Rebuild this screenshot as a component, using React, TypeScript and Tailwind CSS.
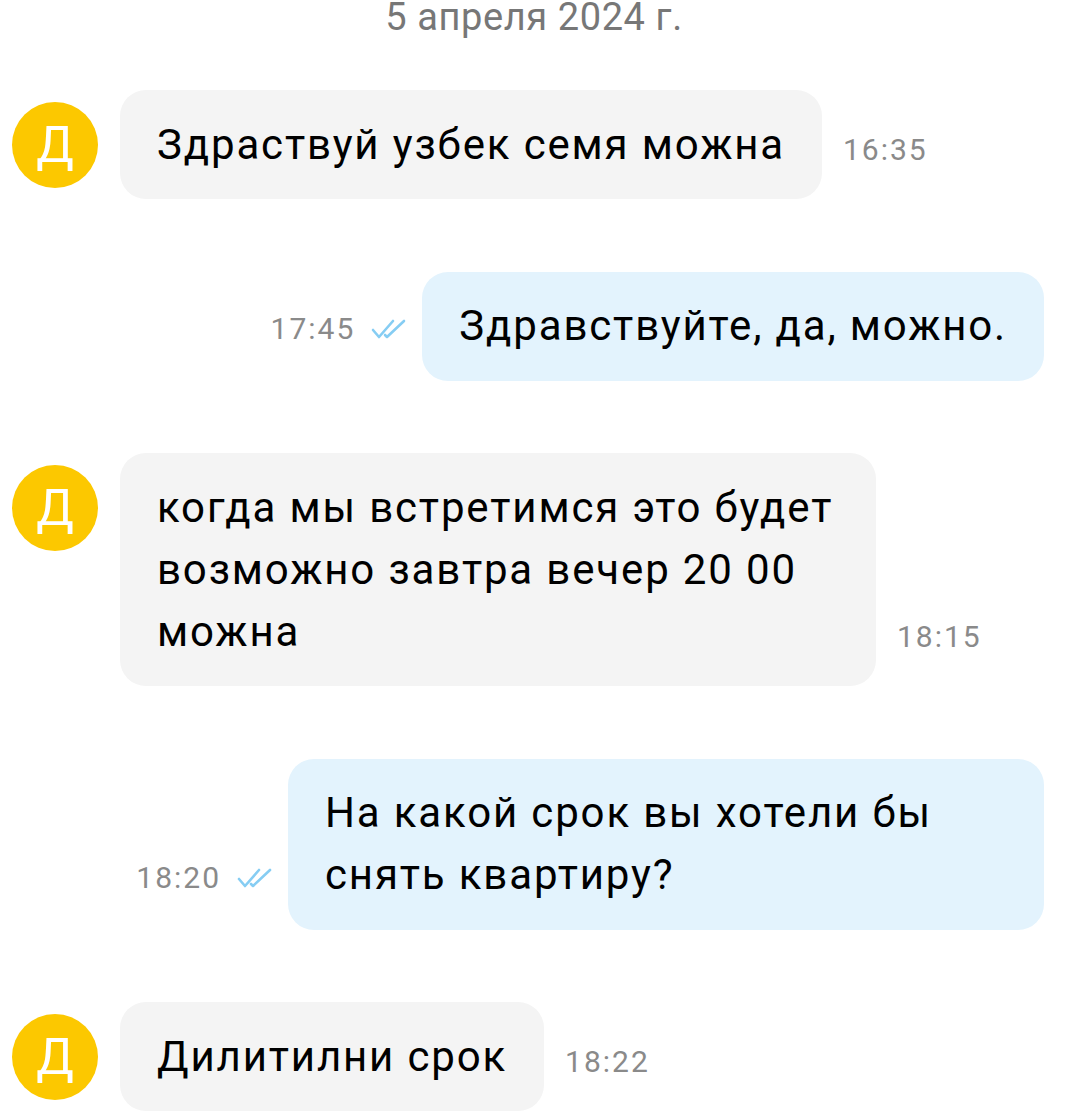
import React from 'react'

type Msg = {
  id: number
  out: boolean
  text: string
  time: string
}

const messages: Msg[] = [
  { id: 1, out: false, text: 'Здраствуй узбек семя можна', time: '16:35' },
  { id: 2, out: true, text: 'Здравствуйте, да, можно.', time: '17:45' },
  { id: 3, out: false, text: 'когда мы встретимся это будет возможно завтра вечер 20 00 можна', time: '18:15' },
  { id: 4, out: true, text: 'На какой срок вы хотели бы снять квартиру?', time: '18:20' },
  { id: 5, out: false, text: 'Дилитилни срок', time: '18:22' },
]

function DoubleCheck() {
  return (
    <svg width="38" height="22" viewBox="0 0 38 22" fill="none" className="shrink-0">
      <path d="M2 12 L8 19 L22 3" stroke="#86cdf3" strokeWidth="2.6" strokeLinecap="round" strokeLinejoin="round" />
      <path d="M14 17 L16 19 L33 3" stroke="#86cdf3" strokeWidth="2.6" strokeLinecap="round" strokeLinejoin="round" />
    </svg>
  )
}

function Avatar() {
  return (
    <div className="w-[86px] h-[86px] shrink-0 rounded-full bg-[#fcc800] flex items-center justify-center self-start mt-[12px]">
      <span className="text-white text-[50px] leading-none">Д</span>
    </div>
  )
}

function Bubble({ msg }: { msg: Msg }) {
  return (
    <div
      className={
        msg.out
          ? 'max-w-[756px] rounded-[26px] bg-[#e3f3fd] px-[37px] py-[23.5px] text-[42px] leading-[62px] tracking-[1.85px] text-black'
          : 'max-w-[756px] rounded-[26px] bg-[#f4f4f4] px-[37px] py-[23.5px] text-[42px] leading-[62px] tracking-[1.85px] text-black'
      }
    >
      {msg.text}
    </div>
  )
}

function Row({ msg }: { msg: Msg }) {
  if (msg.out) {
    return (
      <div className="flex justify-end items-end pr-[24px]">
        <div className="flex items-center gap-[16px] mr-[13px] mb-[34px]">
          <span className="text-[30px] leading-[36px] text-[#8a8a8a] tracking-[2px]">{msg.time}</span>
          <DoubleCheck />
        </div>
        <Bubble msg={msg} />
      </div>
    )
  }
  return (
    <div className="flex items-end pl-[12px]">
      <Avatar />
      <div className="ml-[22px]">
        <Bubble msg={msg} />
      </div>
      <span className="ml-[21px] mb-[31px] text-[30px] leading-[36px] text-[#8a8a8a] tracking-[2px]">{msg.time}</span>
    </div>
  )
}

export default function App() {
  return (
    <div className="w-[1068px] h-[1116px] overflow-hidden bg-white font-['Roboto',sans-serif]">
      <div className="text-center text-[38px] leading-[40px] tracking-[0.6px] text-[#777777] mt-[-3px]">5 апреля 2024 г.</div>
      <div className="flex flex-col gap-[72.5px] mt-[53px]">
        {messages.map((m) => (
          <Row key={m.id} msg={m} />
        ))}
      </div>
    </div>
  )
}
